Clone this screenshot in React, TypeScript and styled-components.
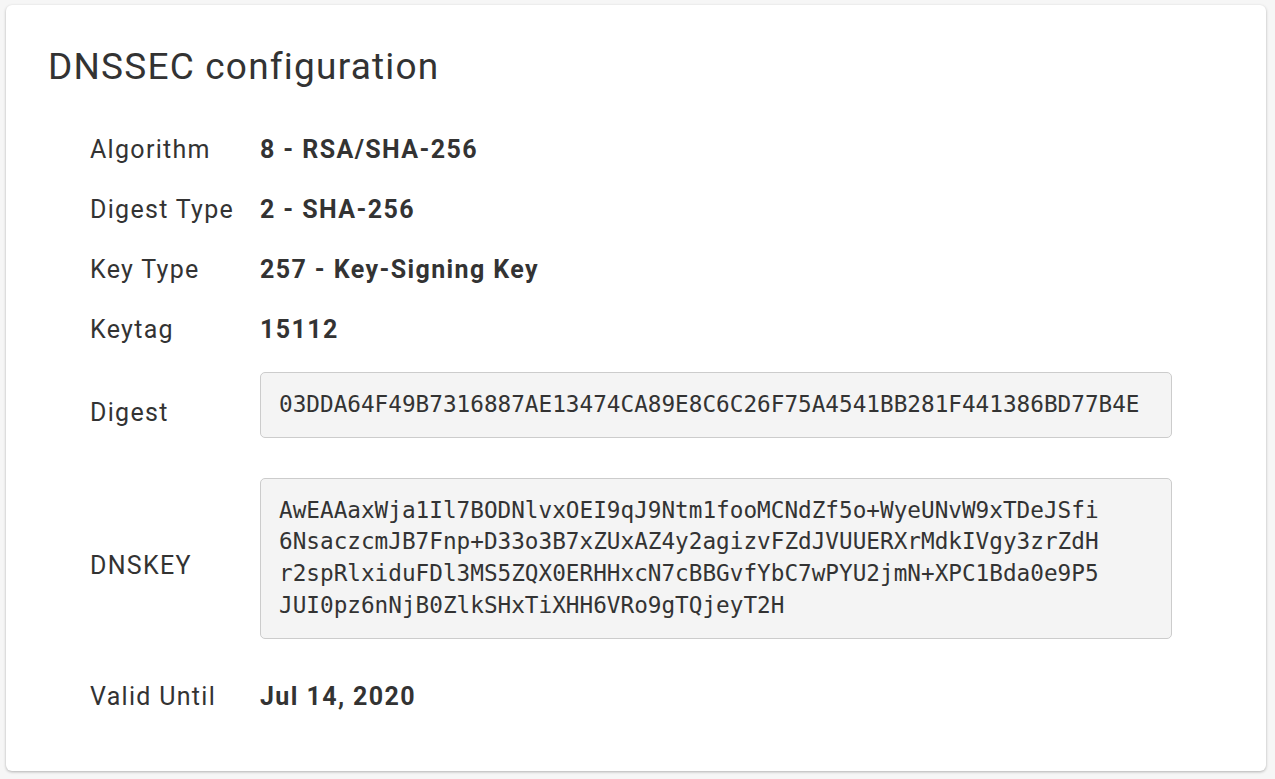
import React from "react";
import styled, { createGlobalStyle } from "styled-components";

const Global = createGlobalStyle`
  html, body {
    margin: 0;
    padding: 0;
    background: #f6f6f6;
  }
  body {
    font-family: Roboto, "Liberation Sans", sans-serif;
    color: #333333;
  }
`;

const Page = styled.div`
  padding: 5px 9px 8px 6px;
`;

const Card = styled.section`
  background: #ffffff;
  border-radius: 6px;
  box-shadow: 0 1px 3px rgba(0, 0, 0, 0.28);
  padding: 40px 40px 43px 42px;
  min-height: 766px;
  box-sizing: border-box;
`;

const Title = styled.h2`
  margin: 0;
  font-size: 37px;
  font-weight: 400;
  line-height: 44px;
  letter-spacing: 1.2px;
  color: #333333;
`;

const Table = styled.div`
  display: grid;
  grid-template-columns: 170px 912px;
  margin: 31px 0 0 42px;
`;

const Label = styled.div`
  font-size: 25px;
  line-height: 36px;
  letter-spacing: 1.3px;
  padding: 12px 0;
  display: flex;
  align-items: center;
  white-space: nowrap;
  color: #333333;
`;

const Value = styled.div`
  font-size: 25px;
  line-height: 36px;
  letter-spacing: 1.4px;
  font-weight: 700;
  padding: 12px 0;
  color: #333333;
`;

const CodeCell = styled.div`
  padding: 12px 0;
`;

const Code = styled.pre`
  margin: 0 0 16px;
  background: #f4f4f4;
  border: 1px solid #cccccc;
  border-radius: 5px;
  padding: 16px 18px;
  font-family: "DejaVu Sans Mono", "Liberation Mono", monospace;
  font-size: 22.7px;
  line-height: 31.7px;
  color: #333333;
  white-space: pre-wrap;
  word-break: break-all;
`;

const rows: { label: string; value: string; code?: boolean }[] = [
  { label: "Algorithm", value: "8 - RSA/SHA-256" },
  { label: "Digest Type", value: "2 - SHA-256" },
  { label: "Key Type", value: "257 - Key-Signing Key" },
  { label: "Keytag", value: "15112" },
  {
    label: "Digest",
    value: "03DDA64F49B7316887AE13474CA89E8C6C26F75A4541BB281F441386BD77B4E",
    code: true,
  },
  {
    label: "DNSKEY",
    value:
      "AwEAAaxWja1Il7BODNlvxOEI9qJ9Ntm1fooMCNdZf5o+WyeUNvW9xTDeJSfi\n6NsaczcmJB7Fnp+D33o3B7xZUxAZ4y2agizvFZdJVUUERXrMdkIVgy3zrZdH\nr2spRlxiduFDl3MS5ZQX0ERHHxcN7cBBGvfYbC7wPYU2jmN+XPC1Bda0e9P5\nJUI0pz6nNjB0ZlkSHxTiXHH6VRo9gTQjeyT2H",
    code: true,
  },
  { label: "Valid Until", value: "Jul 14, 2020" },
];

export default function App() {
  return (
    <Page>
      <Global />
      <Card>
        <Title>DNSSEC configuration</Title>
        <Table>
          {rows.map((r) => (
            <React.Fragment key={r.label}>
              <Label>{r.label}</Label>
              {r.code ? (
                <CodeCell>
                  <Code>{r.value}</Code>
                </CodeCell>
              ) : (
                <Value>{r.value}</Value>
              )}
            </React.Fragment>
          ))}
        </Table>
      </Card>
    </Page>
  );
}
